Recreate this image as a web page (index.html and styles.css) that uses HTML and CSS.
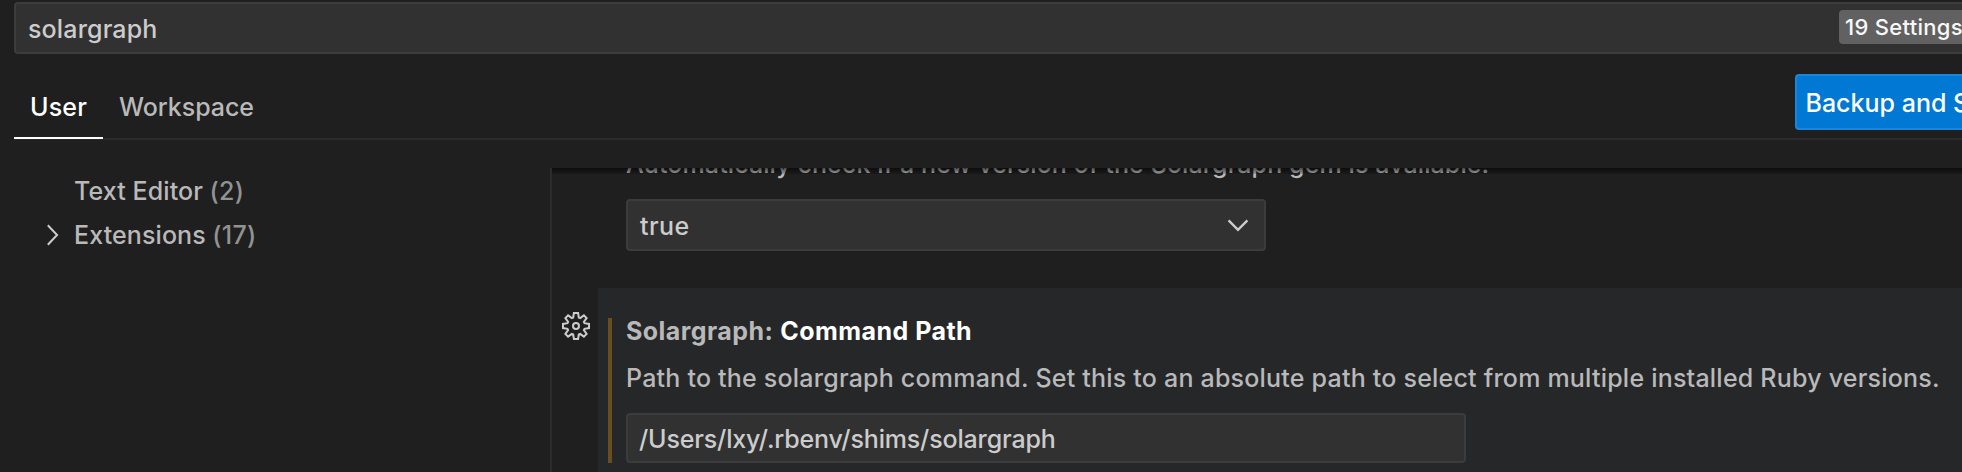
FILE: index.html
```html
<!DOCTYPE html>
<html lang="en">
<head>
<meta charset="utf-8">
<title>Settings</title>
<link rel="stylesheet" href="styles.css">
</head>
<body>
<div class="settings-editor">
  <header class="header">
    <div class="search">
      <span class="search-text">solargraph</span>
      <span class="count-badge">19 Settings</span>
    </div>
    <div class="tabs-row">
      <nav class="tabs">
        <a class="tab tab-active">User</a>
        <a class="tab">Workspace</a>
      </nav>
      <button class="sync-button">Backup and S</button>
    </div>
  </header>
  <div class="body">
    <aside class="toc">
      <div class="toc-row"><span class="twistie"></span><span class="toc-label">Text Editor</span><span class="toc-count">(2)</span></div>
      <div class="toc-row"><span class="twistie"><svg width="14" height="22" viewBox="0 0 14 22"><path d="M1.8 1.3 11.1 11 1.8 20.7"/></svg></span><span class="toc-label">Extensions</span><span class="toc-count">(17)</span></div>
    </aside>
    <main class="list">
      <section class="setting">
        <div class="gutter"></div>
        <div class="setting-main">
          <p class="description clipped">Automatically check if a new version of the Solargraph gem is available.</p>
          <div class="select"><span class="select-value">true</span>
            <svg class="select-arrow" width="24" height="16" viewBox="0 0 24 16"><path d="M2.6 3.4 12 12.8 21.4 3.4"/></svg>
          </div>
        </div>
      </section>
      <section class="setting">
        <div class="gutter">
          <svg class="gear" width="28" height="28" viewBox="0 0 28 28">
            <path d="M11.9 1h4.2l.7 4.5 1.4.6 3.7-2.7 2.7 2.7-2.7 3.7.6 1.4 4.5.7v4.2l-4.5.7-.6 1.4 2.7 3.7-2.7 2.7-3.7-2.7-1.4.6-.7 4.5h-4.2l-.7-4.5-1.4-.6-3.7 2.7-2.7-2.7 2.7-3.7-.6-1.4-4.5-.7v-4.2l4.5-.7.6-1.4-2.7-3.7 2.7-2.7 3.7 2.7 1.4-.6z"/>
            <circle cx="14" cy="14" r="3"/>
          </svg>
        </div>
        <div class="setting-main focused">
          <div class="modified">
            <h3 class="title"><span class="category">Solargraph:</span><span class="name">Command Path</span></h3>
            <p class="description">Path to the solargraph command. Set this to an absolute path to select from multiple installed Ruby versions.</p>
            <div class="input">/Users/lxy/.rbenv/shims/solargraph</div>
          </div>
        </div>
      </section>
    </main>
  </div>
</div>
</body>
</html>
```
FILE: styles.css
```css
* { box-sizing: border-box; }
body {
  margin: 0;
  background: #1f1f1f;
  color: #cccccc;
  font: 450 25px/40px Inter, "Liberation Sans", sans-serif;
}
svg { fill: none; stroke: #cccccc; stroke-width: 2; }
.settings-editor {
  display: flex;
  flex-direction: column;
  height: 472px;
  overflow: hidden;
  white-space: nowrap;
}
.header { padding: 2px 0 0 14px; }
.search {
  display: flex;
  align-items: center;
  justify-content: space-between;
  height: 52px;
  padding: 1px 0 0 12px;
  background: #313131;
  border: 2px solid #3c3c3c;
  border-right: 0;
  border-radius: 4px 0 0 4px;
}
.search-text { letter-spacing: 0.15px; }
.count-badge {
  flex: none;
  width: 123px;
  height: 34px;
  margin-top: -3px;
  padding-left: 6px;
  border-radius: 4px 0 0 4px;
  background: #616161;
  color: #f8f8f8;
  font-size: 22px;
  line-height: 35px;
  letter-spacing: 0.3px;
}
.tabs-row {
  display: flex;
  align-items: flex-end;
  justify-content: space-between;
  height: 86px;
  border-bottom: 2px solid #2b2b2b;
}
.tabs { display: flex; margin-bottom: -1px; }
.tab {
  height: 64px;
  padding: 0 16px;
  border-bottom: 2px solid transparent;
  color: #b9b9b9;
  line-height: 64px;
  letter-spacing: -0.05px;
}
.tab-active { width: 89px; border-color: #ffffff; color: #ffffff; letter-spacing: 0.2px; }
.sync-button {
  width: 167px;
  height: 56px;
  margin-bottom: 8px;
  padding: 2px 0 0 8.5px;
  overflow: hidden;
  border: 2px solid #1a85dc;
  border-right: 0;
  border-radius: 4px 0 0 4px;
  background: #0078d4;
  color: #ffffff;
  font: inherit;
  text-align: left;
}
.body { display: flex; flex: 1; min-height: 0; }
.toc { width: 550px; padding: 29px 0 0 46px; }
.toc-row { display: flex; height: 44px; line-height: 44px; color: #b9b9b9; }
.twistie { display: flex; align-items: center; width: 28px; }
.toc-label { letter-spacing: 0.1px; }
.toc-count { margin-left: 6.5px; color: #929292; letter-spacing: 0.3px; }
.list {
  position: relative;
  flex: 1;
  min-width: 0;
  margin-top: 28px;
  border-left: 2px solid #2b2b2b;
  overflow: hidden;
}
.list::before {
  content: "";
  position: absolute;
  inset: 0 0 auto -2px;
  height: 6px;
  background: linear-gradient(rgba(0, 0, 0, 0.6), rgba(0, 0, 0, 0.15));
}
.setting { display: flex; }
.gutter { flex: none; width: 46px; padding: 24px 0 0 10px; }
.gear { display: block; }
.setting-main { flex: 1; min-width: 0; padding: 0 0 37px 28px; }
.focused { height: 200px; padding: 30px 0 0 10px; background: #262729; }
.modified { height: 145px; padding-left: 14px; border-left: 4px solid #6b4e20; }
.description { margin: 0; color: #b9b9b9; letter-spacing: 0.213px; }
.clipped { margin-top: -24px; letter-spacing: 0.1px; }
.select, .input {
  display: flex;
  align-items: center;
  padding: 2px 17px 0 12px;
  background: #313131;
  border: 2px solid #3c3c3c;
  border-radius: 4px;
}
.select { justify-content: space-between; width: 640px; height: 52px; margin-top: 15px; }
.select-value { letter-spacing: 0.4px; }
.select-arrow { margin-right: -3px; margin-top: -2px; stroke-width: 2.4; }
.input { width: 840px; height: 50px; margin-top: 15px; padding-left: 11px; letter-spacing: -0.16px; }
.title {
  display: flex;
  gap: 7px;
  margin: 0 0 14px;
  font-size: 25px;
  font-weight: 650;
  line-height: 26px;
  letter-spacing: 0.45px;
}
.category { color: #b9b9b9; }
.name { color: #ffffff; }
```
